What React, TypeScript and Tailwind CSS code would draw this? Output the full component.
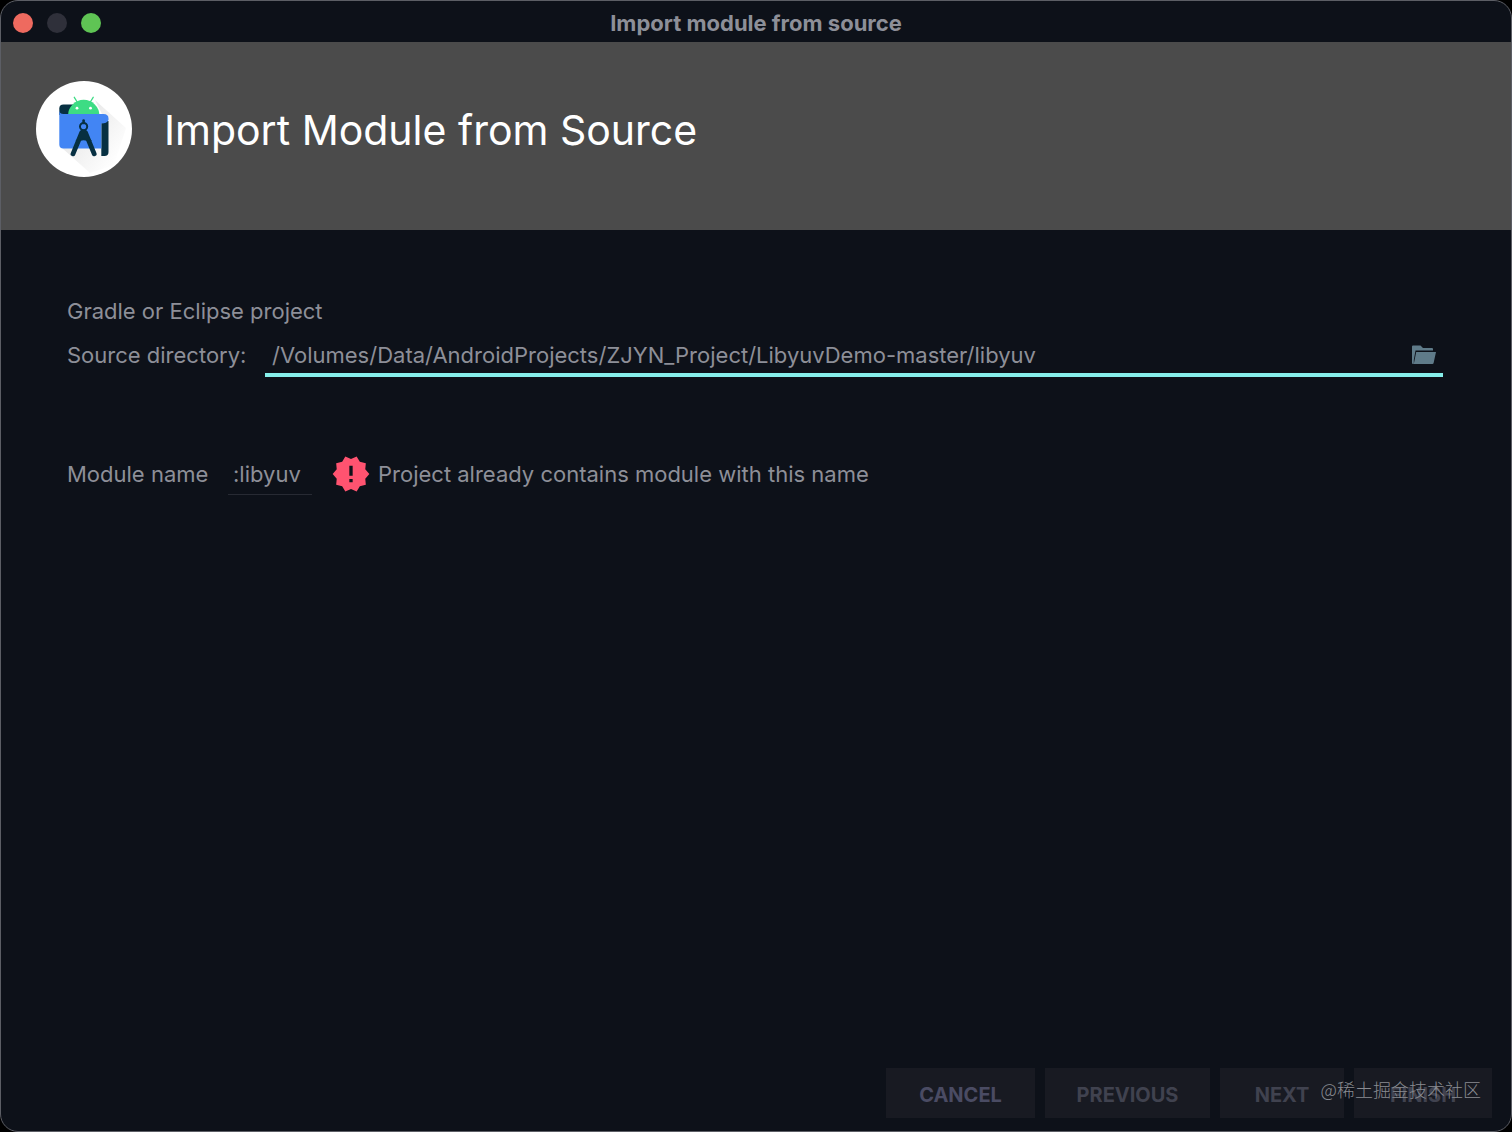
import type { ReactNode } from "react";
import { MdNewReleases } from "react-icons/md";

const trafficLights = [
  { label: "Close", color: "bg-[#ee6a5f]" },
  { label: "Minimize", color: "bg-[#2f303a]" },
  { label: "Zoom", color: "bg-[#5fc454]" },
];

const wizardButtons = [
  { label: "CANCEL", width: "w-[149px]", color: "text-[#4a4b63]", disabled: false },
  { label: "PREVIOUS", width: "w-[165px]", color: "text-[#40424f]", disabled: true },
  { label: "NEXT", width: "w-[124px]", color: "text-[#40424f]", disabled: true },
  { label: "FINISH", width: "w-[138px]", color: "text-[#40424f]", disabled: true },
];

function StudioLogo() {
  return (
    <svg viewBox="0 0 96 96" className="size-24 shrink-0" aria-hidden="true">
      <defs>
        <linearGradient id="shade" x1="0.2" y1="0.2" x2="0.9" y2="0.8">
          <stop offset="0" stopColor="#e6e6e6" />
          <stop offset="1" stopColor="#fff" />
        </linearGradient>
      </defs>
      <circle cx="48" cy="48" r="48" fill="#fff" />
      <path d="M59 19 L90 47 L78 84 L54 92 L26 67 H66 V33 Z" fill="url(#shade)" />
      <path d="M27.500 23.500 H39 V34 H23.300 V27.500 Q23.300 23.500 27.500 23.500 Z" fill="#073042" />
      <path
        d="M38.300 16.300 L41.500 21.500 M57.200 16.300 L54 21.500"
        stroke="#3ddc84"
        strokeWidth="1.300"
        strokeLinecap="round"
      />
      <path d="M32 34.500 A15.700 15.700 0 0 1 63.400 34.500 Z" fill="#3ddc84" />
      <circle cx="41" cy="27.200" r="1.400" fill="#fff" />
      <circle cx="54.500" cy="27.200" r="1.400" fill="#fff" />
      <path d="M65.300 40 H72.500 V71 Q72.500 75 68.500 75 H65.300 Z" fill="#073042" />
      <path
        d="M23.300 29 Q23.300 33 27.500 33 H67.500 Q72.500 33 72.500 37.500 V39 Q71 42.500 65.300 42.500 V67.500 H27.500 Q23.300 67.500 23.300 63.500 Z"
        fill="#4285f4"
      />
      <g stroke="#073042" fill="none">
        <path d="M47.600 39.500 V42" strokeWidth="2.600" strokeLinecap="round" />
        <circle cx="47.600" cy="45.600" r="3.600" strokeWidth="2" />
        <path d="M45.800 51.500 L37 72.800 M49.400 51.500 L58.200 72.800" strokeWidth="4.800" strokeLinecap="round" />
        <path d="M40.500 60.500 Q47.600 55 54.800 60.500" strokeWidth="3" />
      </g>
      <path d="M44 51.500 L46 48.500 H49.200 L51.200 51.500 L54 60 Q47.600 55.500 41.500 60 Z" fill="#073042" />
    </svg>
  );
}

function FolderIcon() {
  return (
    <svg viewBox="0 0 24 20" className="h-5 w-6" aria-hidden="true">
      <path
        d="M0 1.500 Q0 0.500 1 0.500 H8.500 L11 3 H20 Q21 3 21 4 V5.500 H3.500 L1.800 15 V19 H1 Q0 19 0 18 Z"
        fill="#5f7b89"
      />
      <path d="M4.200 7 H24 L21.600 18 Q21.400 19 20.400 19 H1.800 Z" fill="#5f7b89" />
    </svg>
  );
}

function FormRow({ children }: { children: ReactNode }) {
  return <div className="flex h-11 items-center">{children}</div>;
}

export default function App() {
  return (
    <div className="min-h-screen bg-black font-['Inter',sans-serif]">
      <div className="relative flex min-h-screen flex-col overflow-hidden rounded-[18px] border border-[#5c5e65] bg-[#0d1119] text-[22px] text-[#8d8f98]">
        <div className="grid h-[41px] grid-cols-[1fr_auto_1fr] items-center px-3 pt-[2px]">
          <div className="flex gap-[14px]">
            {trafficLights.map((light) => (
              <button
                key={light.label}
                aria-label={light.label}
                className={`size-5 rounded-full ${light.color}`}
              />
            ))}
          </div>
          <p className="text-[22px] leading-6 font-bold">Import module from source</p>
        </div>

        <header className="flex items-center gap-8 bg-[#4b4b4b] px-[35px] pt-[39px] pb-[53px]">
          <StudioLogo />
          <h1 className="pt-[2px] text-[41px] leading-[48px] text-white">Import Module from Source</h1>
        </header>

        <main className="flex-1 pr-[68px] pl-[66px] pt-[59px]">
          <FormRow>
            <p>Gradle or Eclipse project</p>
          </FormRow>

          <FormRow>
            <label htmlFor="source" className="w-[198px] shrink-0">
              Source directory:
            </label>
            <div className="flex h-11 flex-1 items-center border-b-4 border-[#86efea] px-[7px] pt-1">
              <input
                id="source"
                className="min-w-0 flex-1 bg-transparent outline-none"
                defaultValue="/Volumes/Data/AndroidProjects/ZJYN_Project/LibyuvDemo-master/libyuv"
              />
              <button aria-label="Browse">
                <FolderIcon />
              </button>
            </div>
          </FormRow>

          <div className="mt-[75px]">
            <FormRow>
              <label htmlFor="module" className="w-[161px] shrink-0">
                Module name
              </label>
              <input
                id="module"
                className="h-[42px] w-[84px] border-b border-[#272a33] bg-transparent px-[5px] outline-none"
                defaultValue=":libyuv"
              />
              <MdNewReleases className="ml-[19px] size-10 shrink-0 text-[#ff5370]" />
              <p className="ml-[7px]">Project already contains module with this name</p>
            </FormRow>
          </div>
        </main>

        <footer className="flex justify-end gap-[10px] px-[19px] pb-[13px]">
          {wizardButtons.map((button) => (
            <button
              key={button.label}
              disabled={button.disabled}
              className={`h-[50px] bg-[#181a22] pt-1 text-[20px] font-bold ${button.width} ${button.color}`}
            >
              {button.label}
            </button>
          ))}
        </footer>

        <span className="pointer-events-none absolute right-[30px] bottom-[30px] font-['Noto_Sans_CJK_SC',sans-serif] text-[18px] leading-6 font-light text-[#898b91]">
          @稀土掘金技术社区
        </span>
      </div>
    </div>
  );
}
